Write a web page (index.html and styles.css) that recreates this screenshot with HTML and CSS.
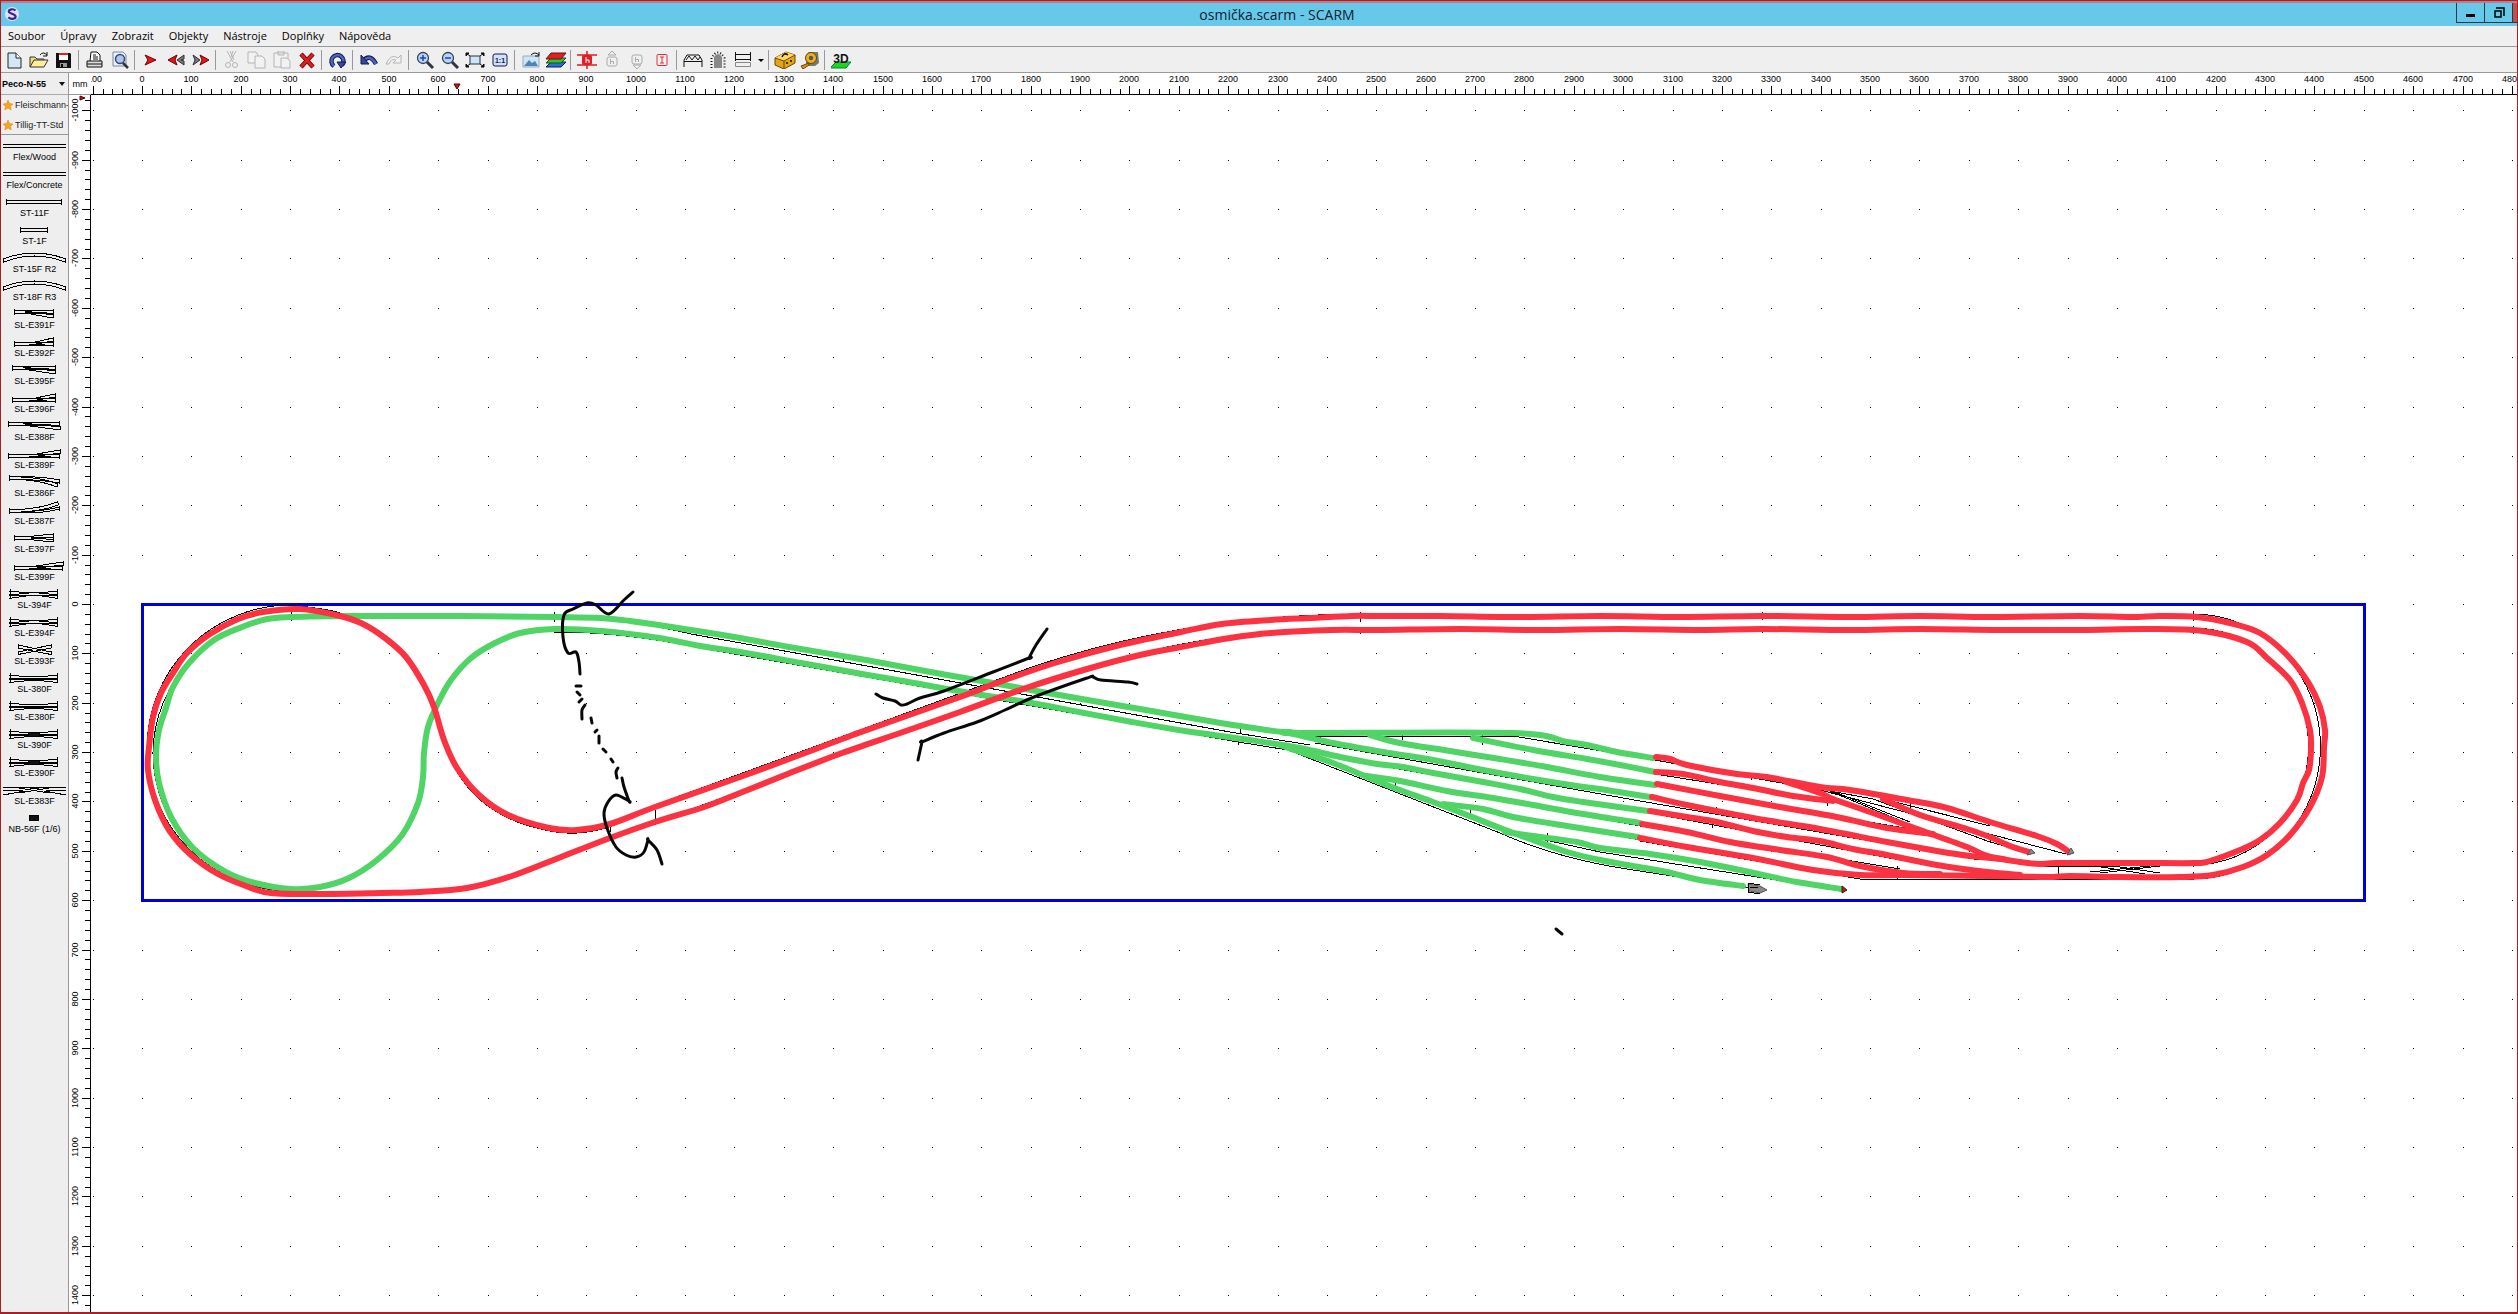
FILE: index.html
```html
<!DOCTYPE html>
<html lang="cs">
<head>
<meta charset="utf-8">
<title>osmička.scarm - SCARM</title>
<link rel="stylesheet" href="styles.css">
</head>
<body>
<svg class="defs" aria-hidden="true">
  <symbol id="flex" viewBox="0 0 67 16"><path d="M2 9.5H65M2 12.5H65"/></symbol>
  <symbol id="st-long" viewBox="0 0 67 16"><path d="M5.500 9.500H60.500V12.500H5.500ZM5.500 8V14M60.500 8V14"/></symbol>
  <symbol id="st-short" viewBox="0 0 67 16"><path d="M19.500 9.500H46.500V12.500H19.500ZM19.500 8V14M46.500 8V14"/></symbol>
  <symbol id="curve" viewBox="0 0 67 16"><path d="M2 12Q33 0 65 12M3 15Q33 3 64 15M2 11L3 16M65 11L64 16"/></symbol>
  <symbol id="r-short" viewBox="0 0 67 16"><path d="M13.500 7.500H52.500M13.500 10.500H52.500M13.500 6V12M52.500 6V12M24 8L52 12M24 10L52 15M52 11V15"/><path d="M24 9H46"/></symbol>
  <symbol id="l-short" viewBox="0 0 67 16"><path d="M13.500 11.500H52.500M13.500 14.500H52.500M13.500 10V16M52.500 10V16M30 12L52 7M30 14L52 10M52 6V11"/><path d="M28 13H44"/></symbol>
  <symbol id="r-mid" viewBox="0 0 67 16"><path d="M11.500 7.500H54.500M11.500 10.500H54.500M11.500 6V12M54.500 6V12M22 8L54 12M22 10L54 15M54 11V15"/><path d="M24 9H48"/></symbol>
  <symbol id="l-mid" viewBox="0 0 67 16"><path d="M11.500 11.500H54.500M11.500 14.500H54.500M11.500 10V16M54.500 10V16M30 12L54 7M30 14L54 10M54 6V11"/><path d="M28 13H46"/></symbol>
  <symbol id="r-long" viewBox="0 0 67 16"><path d="M7.500 7.500H58.500M7.500 10.500H58.500M7.500 6V12M58.500 6V12M22 8L59 12M22 10L59 15M59 11V15"/><path d="M24 9H50"/></symbol>
  <symbol id="l-long" viewBox="0 0 67 16"><path d="M7.500 11.500H58.500M7.500 14.500H58.500M7.500 10V16M58.500 10V16M30 12L59 7M30 14L59 10M59 6V11"/><path d="M28 13H50"/></symbol>
  <symbol id="r-curve" viewBox="0 0 67 16"><path d="M8.500 4V10M8 5.500Q40 5 59 9M8 8.500Q36 8 58 12M20 6Q42 7 57 13M20 8.500Q42 10 56 16M59 8L58 13M57 12L56 16"/></symbol>
  <symbol id="l-curve" viewBox="0 0 67 16"><path d="M8.500 9V15M8 10.500Q36 11 56 3M8 13.500Q40 13 57 6M20 13Q44 12 58 8M20 14Q44 14 59 10M56 2L58 6M58 7L59 12"/></symbol>
  <symbol id="y-turn" viewBox="0 0 67 16"><path d="M13.500 9.500H28L52 7M13.500 12.500H28L52 15M30 11L52 10M30 11L52 12.500M13.500 8V14M52.500 6V15"/></symbol>
  <symbol id="l-express" viewBox="0 0 67 16"><path d="M13.500 11.500H61.500M13.500 14.500H61.500M13.500 10V16M61.500 10V16M28 12L62 7M28 14L62 10M62 6V11"/><path d="M28 13H50"/></symbol>
  <symbol id="cross" viewBox="0 0 67 16"><path d="M8 8.500L28 9.500H38L57 8.500M8 11.500L28 10.500M38 10.500L57 11.500M8 12.500L28 12.500H38L57 12.500M8 15.500L28 12.500H38L57 15.500M9.500 6V16M56.500 6V16"/></symbol>
  <symbol id="cross-short" viewBox="0 0 67 16"><path d="M17 6L50 13M17 9L50 15.500M17 13L50 6M17 15.500L50 9M17 5V9M50 5V9M17 12V16M50 12V16"/></symbol>
  <symbol id="slip" viewBox="0 0 67 16"><path d="M8 8.500L28 9.500H38L57 8.500M8 11.500H57M8 12.500H57M8 15.500L28 13.500H38L57 15.500M9.500 6V16M56.500 6V16"/></symbol>
  <symbol id="slip-double" viewBox="0 0 67 16"><path d="M8 8.500L28 9.500H38L57 8.500M8 11.500H57M8 12.500H57M8 15.500L28 13.500H38L57 15.500M9.500 6V16M56.500 6V16"/><path class="solid" d="M27.500 9.500H38.500V13.500H27.500Z"/></symbol>
  <symbol id="scissors" viewBox="0 0 67 16"><path d="M2 8.500H65M2 11.500H22M45 11.500H65M18 9L48 14M48 9L18 14M26 11L33 9L42 11M2 16L24 12M65 16L43 12"/></symbol>
  <symbol id="bumper" viewBox="0 0 67 16"><path class="solid" d="M28.500 8.500H37.500V13.500H28.500Z"/></symbol>
</svg>

<div class="app">
  <header class="titlebar">
    <svg class="logo" viewBox="0 0 16 16" aria-hidden="true"><circle cx="8" cy="8" r="7" fill="#dce4f4"/><path d="M11.500 4.500C9.500 2.500 4.800 3 4.800 5.500S11.600 7.600 11.600 10.500 6.500 13.600 4.300 11.300" fill="none" stroke="#43208c" stroke-width="2.200"/></svg>
    <h1 class="title">osmička.scarm - SCARM</h1>
    <button class="winbtn" aria-label="Minimalizovat"><svg viewBox="0 0 16 16"><path d="M3 9H12V12H3Z"/></svg></button>
    <button class="winbtn" aria-label="Obnovit"><svg viewBox="0 0 16 16"><path d="M5 3H13V11M4 6H10V12H4Z" fill="none" stroke="#000" stroke-width="1.500"/></svg></button>
    <button class="winbtn close" aria-label="Zavřít"></button>
  </header>

  <nav class="menu">
    <button>Soubor</button><button>Úpravy</button><button>Zobrazit</button><button>Objekty</button><button>Nástroje</button><button>Doplňky</button><button>Nápověda</button>
  </nav>

  <div class="toolbar" role="toolbar">
    <button aria-label="Nový"><svg viewBox="0 0 20 18"><path d="M4 2H12L17 7V17H4Z" fill="#d3e7f7" stroke="#222"/><path d="M12 2V7H17" fill="#fff" stroke="#222"/></svg></button>
    <button aria-label="Otevřít"><svg viewBox="0 0 20 18"><path d="M1 16V6H6L8 8H15V10" fill="#f6dc79" stroke="#333"/><path d="M1 16L5 9H19L15 16Z" fill="#ffee9c" stroke="#333"/><path d="M11 4Q14 0 18 4M18 1V5H14" fill="none" stroke="#111"/></svg></button>
    <button aria-label="Uložit"><svg viewBox="0 0 20 18"><path d="M2 2H16L17 3V17H2Z" fill="#111"/><path d="M5 2H14V9H5Z" fill="#fff"/><path d="M5 2H14V4H5Z" fill="#d22"/><path d="M6 12H13V16H6Z" fill="#999"/><path d="M7 13H9V16H7Z"/></svg></button>
    <span class="sep"></span>
    <button aria-label="Tisk"><svg viewBox="0 0 20 18"><path d="M5 10L6 1H12L15 4V10" fill="#fff" stroke="#111"/><path d="M8 4H11M8 6H13M8 8H13" stroke="#111"/><path d="M2 10H17V16H2Z" fill="#ddd" stroke="#111"/><path d="M2 13H17" stroke="#111"/></svg></button>
    <button aria-label="Náhled"><svg viewBox="0 0 20 18"><path d="M3 1H13L16 4V15H3Z" fill="#eaf2fb" stroke="#789"/><circle cx="10" cy="8" r="4.500" fill="#a9c8ef" stroke="#447" stroke-width="1.500"/><path d="M13 12L18 17" stroke="#334" stroke-width="2.500"/></svg></button>
    <span class="sep"></span>
    <button aria-label="Start"><svg viewBox="0 0 20 18"><path d="M4 4L15 9L4 14L7 9Z" fill="#e01818" stroke="#700"/></svg></button>
    <button aria-label="Zpět po trati"><svg viewBox="0 0 20 18"><path d="M18 4L11 9L18 14V10L15 9L18 8Z" fill="#777" stroke="#333"/><path d="M11 4L2 9L11 14L9 9Z" fill="#e01818" stroke="#700"/></svg></button>
    <button aria-label="Vpřed po trati"><svg viewBox="0 0 20 18"><path d="M2 4L9 9L2 14L4 9Z" fill="#777" stroke="#333"/><path d="M9 4L18 9L9 14L11 9Z" fill="#e01818" stroke="#700"/></svg></button>
    <span class="sep"></span>
    <button disabled aria-label="Vyjmout"><svg viewBox="0 0 20 18" fill="none" stroke="#b4b4b4"><path d="M5 0L11 11M8 0L12 9M14 0L8 11M11 0L9 6"/><circle cx="6" cy="14" r="2.500"/><circle cx="13" cy="14" r="2.500"/></svg></button>
    <button disabled aria-label="Kopírovat"><svg viewBox="0 0 20 18" fill="#f2f2f2" stroke="#b4b4b4"><path d="M1 1H9L11 4V12H1Z"/><path d="M8 5H15L18 8V17H8Z"/></svg></button>
    <button disabled aria-label="Vložit"><svg viewBox="0 0 20 18" fill="#f2f2f2" stroke="#b4b4b4"><path d="M2 2H16V16H2ZM6 0H12V4H6Z"/><path d="M9 7H15L18 10V17H9Z"/></svg></button>
    <button aria-label="Smazat"><svg viewBox="0 0 20 18"><path d="M4 3L16 16M16 3L4 16" stroke="#501010" stroke-width="4.500"/><path d="M4 3L16 16M16 3L4 16" stroke="#e01c1c" stroke-width="2.800"/></svg></button>
    <span class="sep"></span>
    <button aria-label="Otočit"><svg viewBox="0 0 20 18"><path d="M6 15A6 6 0 1 1 14 14" fill="none" stroke="#181848" stroke-width="4.500"/><path d="M6 15A6 6 0 1 1 14 14" fill="none" stroke="#4a63c4" stroke-width="2.500"/><path d="M9 11H18L13 17Z" fill="#334a9e" stroke="#181848"/></svg></button>
    <span class="sep"></span>
    <button aria-label="Zpět"><svg viewBox="0 0 20 18"><path d="M4 10Q11 2 17 13" fill="none" stroke="#181848" stroke-width="4.500"/><path d="M5 9Q11 3 17 13" fill="none" stroke="#4a63c4" stroke-width="2.500"/><path d="M2 4V13H10Z" fill="#334a9e" stroke="#181848"/></svg></button>
    <button disabled aria-label="Znovu"><svg viewBox="0 0 20 18"><path d="M2 13Q7 2 14 7L17 4V12H9L12 9Q7 7 5 13Z" fill="#f2f2f2" stroke="#b4b4b4"/></svg></button>
    <span class="sep"></span>
    <button aria-label="Přiblížit"><svg viewBox="0 0 20 18"><circle cx="8" cy="7" r="5.500" fill="#b9d4f6" stroke="#345" stroke-width="1.300"/><path d="M12 11L18 17" stroke="#334" stroke-width="3"/><path d="M5 7H11M8 4V10" stroke="#2540b0" stroke-width="1.500"/></svg></button>
    <button aria-label="Oddálit"><svg viewBox="0 0 20 18"><circle cx="8" cy="7" r="5.500" fill="#b9d4f6" stroke="#345" stroke-width="1.300"/><path d="M12 11L18 17" stroke="#334" stroke-width="3"/><path d="M5 7H11" stroke="#2540b0" stroke-width="1.500"/></svg></button>
    <button aria-label="Celý výkres"><svg viewBox="0 0 20 18"><path d="M5 5H15V13H5Z" fill="#cfe2f6" stroke="#234"/><path d="M1 5V2H4ZM16 2H19V5ZM1 13V16H4ZM19 13V16H16ZM1 2L5 5M19 2L15 5M1 16L5 13M19 16L15 13" stroke="#111"/></svg></button>
    <button aria-label="Měřítko 1:1"><svg viewBox="0 0 20 18"><rect x="3" y="3" width="14" height="12" rx="2" fill="#cfe2fa" stroke="#181848"/><text x="10" y="12" text-anchor="middle" class="ico-text">1:1</text></svg></button>
    <span class="sep"></span>
    <button aria-label="Obrázek pozadí"><svg viewBox="0 0 20 18"><path d="M2 5H18V16H2Z" fill="#cfe4f4" stroke="#9ab"/><path d="M3 15L8 9L11 12L14 10L17 15Z" fill="#4d86b6"/><path d="M10 4Q14 0 18 4M18 1V5H14" fill="none" stroke="#111"/></svg></button>
    <button class="wide" aria-label="Vrstvy"><svg viewBox="0 0 22 18"><path d="M1 16L6 11H21L16 16Z" fill="#2b6be0" stroke="#124"/><path d="M1 12L6 7H21L16 12Z" fill="#2dc52d" stroke="#151"/><path d="M1 8L6 2H21L16 8Z" fill="#e02020" stroke="#611"/></svg></button>
    <span class="sep"></span>
    <button aria-label="Výška"><svg viewBox="0 0 20 18"><path d="M0 4H20M0 14H20M10 0V18" stroke="#e01c24" stroke-width="1.500"/><rect x="5" y="4" width="10" height="10" rx="2" fill="#e01c24"/><path d="M9 6V12M9 9H12V12" stroke="#fff" fill="none"/></svg></button>
    <button disabled aria-label="Zvýšit"><svg viewBox="0 0 20 18" fill="none" stroke="#aaa"><path d="M6 4L10 0L14 4Z"/><rect x="5" y="6" width="10" height="9" rx="2"/><path d="M8.500 8V13M8.500 10.500H11.500V13"/></svg></button>
    <button disabled aria-label="Snížit"><svg viewBox="0 0 20 18" fill="none" stroke="#aaa"><path d="M6 14L10 18L14 14Z"/><rect x="5" y="4" width="10" height="9" rx="2"/><path d="M8.500 6V11M8.500 8.500H11.500V11"/></svg></button>
    <button aria-label="Vyrovnat"><svg viewBox="0 0 20 18" fill="none" stroke="#e0303a"><rect x="5" y="3.500" width="10" height="11" rx="1"/><path d="M8 6H12M10 6V12M8 12H12"/></svg></button>
    <span class="sep"></span>
    <button aria-label="Most"><svg viewBox="0 0 20 18" fill="none" stroke="#111"><path d="M1 16V9L4 4H16L19 9V16M1 10.500H19M3 9L6 5L9 9L12 5L15 9L17 6"/></svg></button>
    <button aria-label="Tunel"><svg viewBox="0 0 20 18"><path d="M6 17V6Q10 0 14 6V17Z" fill="#888"/><path d="M3.500 17V7Q10 -4 16.500 7V17" fill="none" stroke="#111" stroke-width="2" stroke-dasharray="1 2"/></svg></button>
    <button aria-label="Nástupiště"><svg viewBox="0 0 20 18" fill="none" stroke="#111"><path d="M2 3.500H18M2 8.500H18M2.500 1V10M17.500 1V10"/><path d="M2.500 11.500H17.500V15.500H2.500Z" stroke="#888"/></svg></button>
    <button class="drop" aria-label="Další typy"><svg viewBox="0 0 11 18"><path d="M3 8H9L6 11Z"/></svg></button>
    <span class="sep"></span>
    <button class="wide" aria-label="Nástroje"><svg viewBox="0 0 22 18"><path d="M1 7L12 1L21 4V12L10 18L1 14Z" fill="#e2a717" stroke="#6b4700"/><path d="M1 7L12 1L21 4L10 10Z" fill="#ffd85c"/><path d="M1 7L10 10L21 4M10 10V18" fill="none" stroke="#6b4700"/><path d="M8 6Q10 1 14 4M13 11V13M17 9V11" stroke="#111" fill="none" stroke-width="1.500"/></svg></button>
    <button aria-label="Metr"><svg viewBox="0 0 20 18"><path d="M6 4L9 1H18L19 12L15 15H6Z" fill="#777"/><circle cx="11" cy="7" r="5.500" fill="#e9b021" stroke="#6b4700"/><circle cx="11" cy="7" r="2.200" fill="#555"/><path d="M1 15L9 12V14L3 18Z" fill="#d09512" stroke="#6b4700"/></svg></button>
    <span class="sep"></span>
    <button aria-label="3D zobrazení"><svg viewBox="0 0 20 18"><path d="M0 16L5 11H20L15 17H0Z" fill="#1fd31f" stroke="#084"/><text x="10" y="12" text-anchor="middle" class="ico-3d">3D</text></svg></button>
  </div>

  <div class="work">
    <aside class="library">
      <div class="picker"><select aria-label="Kolejový systém"><option>Peco-N-55</option></select></div>
      <div class="favs">
        <a href="#fleischmann"><svg viewBox="0 0 10 10"><path d="M5 0L6.500 3.500L10 4L7.500 6.300L8.200 10L5 8L1.800 10L2.500 6.300L0 4L3.500 3.500Z"/></svg>Fleischmann-</a>
        <a href="#tillig"><svg viewBox="0 0 10 10"><path d="M5 0L6.500 3.500L10 4L7.500 6.300L8.200 10L5 8L1.800 10L2.500 6.300L0 4L3.500 3.500Z"/></svg>Tillig-TT-Std</a>
      </div>
      <div class="parts">
        <button><svg><use href="#flex"/></svg>Flex/Wood</button>
        <button><svg><use href="#flex"/></svg>Flex/Concrete</button>
        <button><svg><use href="#st-long"/></svg>ST-11F</button>
        <button><svg><use href="#st-short"/></svg>ST-1F</button>
        <button><svg><use href="#curve"/></svg>ST-15F R2</button>
        <button><svg><use href="#curve"/></svg>ST-18F R3</button>
        <button><svg><use href="#r-short"/></svg>SL-E391F</button>
        <button><svg><use href="#l-short"/></svg>SL-E392F</button>
        <button><svg><use href="#r-mid"/></svg>SL-E395F</button>
        <button><svg><use href="#l-mid"/></svg>SL-E396F</button>
        <button><svg><use href="#r-long"/></svg>SL-E388F</button>
        <button><svg><use href="#l-long"/></svg>SL-E389F</button>
        <button><svg><use href="#r-curve"/></svg>SL-E386F</button>
        <button><svg><use href="#l-curve"/></svg>SL-E387F</button>
        <button><svg><use href="#y-turn"/></svg>SL-E397F</button>
        <button><svg><use href="#l-express"/></svg>SL-E399F</button>
        <button><svg><use href="#cross"/></svg>SL-394F</button>
        <button><svg><use href="#cross"/></svg>SL-E394F</button>
        <button><svg><use href="#cross-short"/></svg>SL-E393F</button>
        <button><svg><use href="#slip"/></svg>SL-380F</button>
        <button><svg><use href="#slip"/></svg>SL-E380F</button>
        <button><svg><use href="#slip-double"/></svg>SL-390F</button>
        <button><svg><use href="#slip-double"/></svg>SL-E390F</button>
        <button><svg><use href="#scissors"/></svg>SL-E383F</button>
        <button><svg><use href="#bumper"/></svg>NB-56F (1/6)</button>
      </div>
    </aside>
    <div class="unit">mm</div>
    <svg class="ruler-x" id="ruler-x"></svg>
    <svg class="ruler-y" id="ruler-y"></svg>
    <svg class="plan" id="plan"></svg>
  </div>
</div>
<script src="plan.js"></script>
</body>
</html>
```

FILE: styles.css
```css
* { box-sizing: border-box; }
body { margin: 0; font-family: "Liberation Sans", Arial, sans-serif; font-size: 9px; color: #000; background: #fff; }
button { border: 0; margin: 0; padding: 0; background: none; font: inherit; color: inherit; }
svg { display: block; }
.defs { position: absolute; width: 0; height: 0; }

.app { display: flex; flex-direction: column; height: 100vh; border: 1px solid #b01c24; border-bottom-width: 2px; }

.titlebar { display: flex; align-items: flex-start; height: 25px; padding-left: 3px; background: #67c9ea; border-top: 2px solid #b9808c; }
.logo { width: 16px; height: 16px; margin-top: 3px; }
.title { flex: 1; margin: 0; padding-left: 78px; text-align: center; font: 14px/24px "Open Sans", "Noto Sans", sans-serif; color: #10202c; }
.winbtn { width: 28px; height: 20px; border: 1px solid #223c48; border-top: 0; border-right: 0; display: flex; align-items: center; justify-content: center; }
.winbtn svg { width: 16px; height: 16px; }
.winbtn.close { width: 5px; background: #c4504c; }

.menu { display: flex; align-items: center; gap: 15px; height: 21px; padding-left: 7px; background: #efefef; border-bottom: 1px solid #9a9a9a; font: 11px/20px "Open Sans", "Noto Sans", sans-serif; }

.toolbar { display: flex; align-items: center; height: 26px; background: #efefef; border-bottom: 1px solid #9a9a9a; }
.toolbar button { display: flex; justify-content: center; width: 25px; }
.toolbar svg { width: 20px; height: 18px; }
.toolbar .wide svg { width: 22px; }
.toolbar .drop { width: 11px; }
.toolbar .drop svg { width: 11px; }
.sep { width: 6px; height: 20px; border-left: 1px solid #999; margin-left: 2px; margin-right: -2px; }
.ico-text { font: bold 7px "Liberation Sans", sans-serif; fill: #181848; }
.ico-3d { font: bold 12px "Liberation Sans", sans-serif; fill: #111; }

.work { flex: 1; min-height: 0; display: grid; grid-template-columns: 68px 22px 1fr; grid-template-rows: 22px 1fr; overflow: hidden; }
.library { grid-row: 1 / 3; display: flex; flex-direction: column; background: #eee; border-right: 1px solid #a09494; overflow: hidden; }
.picker { position: relative; height: 22px; border-bottom: 1px solid #aaa; }
.picker select { width: 100%; height: 21px; padding: 0 0 0 1px; border: 0; appearance: none; background: none; font: bold 9px "Liberation Sans", sans-serif; color: #000; }
.picker::after { content: ""; position: absolute; right: 3px; top: 9px; border: 3px solid transparent; border-top: 4px solid #111; border-bottom: 0; pointer-events: none; }
.favs { height: 40px; border-bottom: 1px solid #999; }
.favs a { display: flex; align-items: center; gap: 2px; height: 20px; padding-left: 2px; color: #222; text-decoration: none; white-space: nowrap; }
.favs svg { flex: none; width: 10px; height: 10px; fill: #f7a51c; stroke: #d98710; stroke-width: 0.500; }
.parts { display: flex; flex-direction: column; }
.parts button { display: block; height: 28px; line-height: 12px; text-align: center; white-space: nowrap; }
.parts svg { width: 67px; height: 16px; fill: none; stroke: #000; stroke-width: 1; shape-rendering: crispEdges; }
.solid { fill: #111; }

.unit { padding-top: 6px; text-align: center; border-bottom: 1px solid #999; }
.ruler-x, .ruler-y, .plan { width: 100%; height: 100%; overflow: hidden; }
.ruler-x text, .ruler-y text { font-size: 9px; fill: #000; text-anchor: middle; }
.ticks { stroke: #000; fill: none; shape-rendering: crispEdges; }
.cursor { fill: #c8141e; stroke: #500; }

.dots { fill: #000; shape-rendering: crispEdges; }
.board { fill: none; stroke: #0000d2; stroke-width: 3; }
.rail { fill: none; stroke: #000; stroke-width: 1; shape-rendering: crispEdges; }
.ink { fill: none; stroke-width: 6; stroke-linecap: round; stroke-linejoin: round; }
.green { stroke: #50d465; }
.red { stroke: #fb3242; }
.black { stroke: #080808; stroke-width: 3; }
.stop { fill: #888; stroke: #555; }
.stop-red { fill: #b01c24; stroke: #511; }
```

FILE: plan.js
```js
// Sheet scale and the place of the board's zero point inside the plan view.
const PX_PER_100 = 49.374;
const ZERO_X = 51;
const ZERO_Y = 509;
const NS = 'http://www.w3.org/2000/svg';

function add(parent, tag, attrs, text) {
  const el = document.createElementNS(NS, tag);
  for (const key in attrs) el.setAttribute(key, attrs[key]);
  if (text !== undefined) el.textContent = text;
  parent.appendChild(el);
  return el;
}

// Smooth curve through "x,y x,y ..." points.
function smooth(list) {
  const p = list.trim().split(/\s+/).map(s => s.split(',').map(Number));
  let d = `M${p[0]}`;
  for (let i = 0; i < p.length - 1; i++) {
    const a = p[i - 1] || p[i], b = p[i], c = p[i + 1], e = p[i + 2] || c;
    d += `C${b[0] + (c[0] - a[0]) / 6},${b[1] + (c[1] - a[1]) / 6} ${c[0] - (e[0] - b[0]) / 6},${c[1] - (e[1] - b[1]) / 6} ${c}`;
  }
  return d;
}

const rails = [
  'M554 618H291A139 136 0 0 0 153 752A139 137 0 0 0 291 890',
  'M291 605A144 143 0 0 0 147 748A144 143 0 0 0 291 891H420Q468 891 512 874L1034 685Q1190 628 1352 628H2193A115 118 0 0 1 2193 865H2040Q1985 861 1968 849L1832 792',
  smooth('291,605 340,613 385,636 424,683 436,714 446,747 457,772 478,798 508,818 545,830 577,833 612,826 655,805'),
  'M655 805L1032 667Q1185 615 1360 614H2193A127 132 0 0 1 2193 879H1860L1640 841',
  'M554 618Q625 618 691 634L1230 732L1310 745M554 632Q625 632 700 648L1238 742L1288 750L1500 833Q1560 860 1640 871L1762 890',
  'M1300 736H1513L1655 760L1820 790L2066 854M1315 743L1640 801L1980 860M1376 737L1655 786L1905 828M1470 737L1655 774L1830 802',
  'M1330 757L1650 813L1900 860L1986 873M1375 777L1640 826L1900 869M1450 805L1640 840M1518 834L1600 852L1845 891',
  'M1830 791L1873 799L1990 842L2030 853M1883 799L1990 826M1832 791L1910 822M2040 866L2120 867L2160 873M2090 872L2160 865M2095 866L2145 874M2100 873L2160 866',
  'M291 612V621M554 612V622M554 628V633M843 656V662M1240 728V734M1238 739V745M1360 612V622M1360 628V634M1762 612V620M1762 626V633M2193 611V621M2193 626V634M2193 860V867M2193 872V880M655 810V825M610 824V832M1320 731V740M1402 730V740M1482 730V745M1395 778V787M1470 810V818M1547 833V843M1751 774V780M1716 807V815M1712 822V828M1827 800V806M1910 800V812M1990 836V843M1988 820V826M1897 866V880M1977 872V880M2058 862V878'
];

const green = [
  '1303,733 1283,732 1246,727 1197,719 1140,709 1099,702 1042,692 993,683 936,673 866,660 789,647 740,638 691,630 630,621 601,618 555,617 460,616 353,616 291,617 267,619 242,627 214,640 189,663 173,687 166,708 159,730 156,757 159,783 171,817 193,848 226,872 255,883 291,889 320,887 349,878 377,860 402,835 418,803 423,777 424,753 428,727 438,703 451,680 471,658 495,643 520,633 555,629 602,631 659,638 700,646 740,652 801,663 862,674 903,681 964,692 1026,702 1079,712 1132,722 1185,731 1250,740 1300,748 1340,757 1377,764 1403,767 1433,773 1483,782 1520,789 1553,797 1583,802 1648,811',
  '1290,732 1303,733 1513,733 1567,742 1587,745 1617,752 1653,758',
  '1473,738 1533,750 1587,759 1620,765 1655,772',
  '1370,735 1400,743 1450,751 1500,759 1547,767 1600,777 1655,785',
  '1285,732 1333,743 1383,752 1433,760 1483,770 1533,779 1577,786 1600,789 1650,797',
  '1280,745 1300,752 1333,763 1367,777 1397,789 1433,802 1467,815 1500,828 1533,840 1567,852 1600,860 1633,866 1667,872 1700,880 1743,886',
  '1366,776 1400,781 1447,791 1493,798 1533,805 1583,814 1640,823',
  '1443,804 1483,809 1513,817 1567,826 1638,837',
  '1505,832 1533,836 1577,842 1600,848 1650,854 1700,862 1740,870 1763,875 1797,882 1841,889'
];

const red = [
  '2120,863 2057,863 2040,864 2020,862 1987,856 1967,847 1920,830 1873,813 1833,799 1820,793 1786,782',
  '1656,757 1670,759 1687,765 1737,774 1767,777 1820,787 1850,790 1907,800 1947,808 1990,822 2037,836 2057,844 2069,852',
  '1883,799 1920,815 1967,829 1990,837 2010,846 2029,852',
  '1656,772 1683,774 1720,782 1753,788 1793,796 1833,801',
  '1657,784 1720,796 1780,807 1837,817 1887,828 1933,834',
  '1652,797 1687,805 1753,818 1820,829 1887,842 1937,851 1970,856 2003,859',
  '1650,811 1687,817 1717,822 1753,831 1787,837 1820,841 1853,849 1887,855 1937,865 1987,872 2020,875',
  '1642,824 1687,832 1730,842 1780,850 1827,857 1860,866 1903,873 1940,874',
  '1640,838 1687,847 1753,858 1813,870 1860,875 1903,875 1987,876 2047,877 2070,876 2120,877 2180,877 2213,875 2243,867 2267,855 2290,835 2310,807 2322,777 2324,747 2325,730 2320,707 2308,682 2287,655 2260,633 2230,623 2197,617 2160,616 2130,617 2080,616 1990,617 1920,616 1850,617 1762,616 1680,617 1600,616 1520,617 1440,616 1380,616 1352,616 1311,618 1271,620 1222,624 1181,632 1120,645 1058,662 1005,680 960,697 895,720 850,736 813,750 740,777 655,807 610,824 577,830 549,828 508,815 479,795 457,768 444,740 434,707 424,685 406,657 385,638 361,623 336,615 300,609 263,612 238,619 210,634 187,653 173,673 161,693 153,717 149,747 148,770 155,800 169,830 191,855 218,874 246,886 271,893 324,894 381,893 420,892 467,888 512,876 561,857 610,838 655,822 704,807 740,793 785,775 842,753 903,732 960,712 1026,688 1087,669 1140,655 1181,647 1230,638 1271,633 1332,630 1380,630 1460,629 1540,630 1620,629 1700,630 1762,629 1850,630 1920,629 2000,630 2080,630 2147,629 2203,631 2247,642 2267,658 2290,680 2302,703 2310,730 2311,750 2309,770 2303,783 2297,800 2280,823 2260,840 2240,850 2210,861 2197,863 2147,863 2120,863'
];

const notes = [
  '633,592 624,600 609,614 596,605 587,603 573,609 564,615 563,637 568,653 576,652 579,662 580,674',
  '576,686 581,686', '577,692 580,695', '579,702 582,699', '585,705 582,710 582,719', '591,718 592,723',
  '595,732 597,730', '599,736 599,743', '603,749 606,752', '611,759 613,762', '618,768 616,772 617,778',
  '622,778 624,787 629,801 629,801 616,795 608,802 604,813 607,828 616,847 626,855 636,857 644,852 648,840 648,840 657,850 662,864',
  '876,694 883,698 895,701 901,705 907,704 920,698 944,691 993,672 1029,658 1029,658 1036,645 1047,629',
  '918,760 922,742 922,742 944,733 977,722 1005,710 1034,697 1087,678 1093,677 1101,680 1128,682 1137,684',
  '1556,929 1562,934'
];

function drawPlan() {
  const svg = document.getElementById('plan');
  svg.replaceChildren();
  const w = svg.clientWidth, h = svg.clientHeight;

  let dots = '';
  for (let i = -1; ZERO_X + i * PX_PER_100 < w; i++)
    for (let j = -10; ZERO_Y + j * PX_PER_100 < h; j++)
      dots += `M${Math.round(ZERO_X + i * PX_PER_100)} ${Math.round(ZERO_Y + j * PX_PER_100)}h1v1h-1z`;
  add(svg, 'path', { d: dots, class: 'dots' });

  const g = add(svg, 'g', { transform: 'translate(-91 -95)' });
  add(g, 'rect', { x: 142.5, y: 604.5, width: 2222, height: 296, class: 'board' });
  rails.forEach(d => add(g, 'path', { d, class: 'rail' }));
  green.forEach(p => add(g, 'path', { d: smooth(p), class: 'ink green' }));
  red.forEach(p => add(g, 'path', { d: smooth(p), class: 'ink red' }));
  add(g, 'path', { d: 'M1748 884L1760 886L1767 890L1760 893L1749 891Z', class: 'stop' });
  add(g, 'path', { d: 'M1748 883L1760 885M1748 892L1760 894M1750 887H1758M1748 883V892', class: 'rail' });
  add(g, 'path', { d: 'M1842 886L1847 890L1842 893Z', class: 'stop-red' });
  add(g, 'path', { d: 'M2031 849L2035 853L2027 855Z', class: 'stop' });
  add(g, 'path', { d: 'M2071 848L2074 853L2067 855Z', class: 'stop' });
  notes.forEach(p => add(g, 'path', { d: smooth(p), class: 'ink black' }));
}

function drawRulers() {
  const rx = document.getElementById('ruler-x'), ry = document.getElementById('ruler-y');
  rx.replaceChildren();
  ry.replaceChildren();
  const w = rx.clientWidth, h = ry.clientHeight;
  let d = `M0 21.5H${w}`;
  for (let n = -5; ; n++) {
    const x = Math.round(ZERO_X + n * PX_PER_100 / 5);
    if (x > w + 20) break;
    const major = n % 5 === 0;
    d += `M${x + 0.5} ${major ? 13 : 16}V21`;
    if (major) add(rx, 'text', { x, y: 9 }, n * 20);
  }
  add(rx, 'path', { d, class: 'ticks' });
  add(rx, 'path', { d: 'M363 11H369L366 16Z', class: 'cursor' });

  d = `M21.5 0V${h}`;
  for (let n = -51; ; n++) {
    const y = Math.round(ZERO_Y + n * PX_PER_100 / 5);
    if (y > h + 20) break;
    const major = n % 5 === 0;
    d += `M${major ? 13 : 16} ${y + 0.5}H21`;
    if (major) add(ry, 'text', { transform: `translate(9 ${y}) rotate(-90)` }, n * 20);
  }
  add(ry, 'path', { d, class: 'ticks' });
  add(ry, 'path', { d: 'M11 1V5L16 3Z', class: 'cursor' });
}

function draw() { drawPlan(); drawRulers(); }
window.addEventListener('resize', draw);
draw();
```
